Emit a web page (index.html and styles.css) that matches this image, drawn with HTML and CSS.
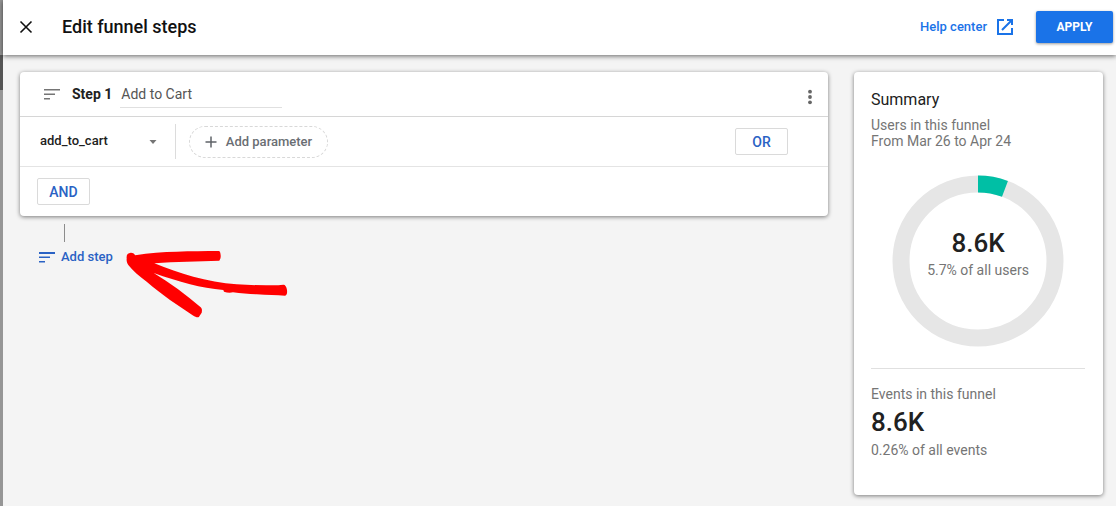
FILE: index.html
```html
<!DOCTYPE html>
<html lang="en">
<head>
<meta charset="utf-8">
<title>Edit funnel steps</title>
<link rel="stylesheet" href="styles.css">
</head>
<body>
<div class="backdrop"><div class="backdrop-bar"></div></div>
<div class="sheet">
  <header class="topbar">
    <button class="icon-button close" type="button" aria-label="Close">
      <svg width="14" height="14" viewBox="0 0 14 14"><path d="M1.5 1.5l11 11M12.500 1.500l-11 11" stroke="#111" stroke-width="1.600" fill="none"/></svg>
    </button>
    <h1 class="title">Edit funnel steps</h1>
    <a class="help" href="#">Help center
      <svg width="18" height="18" viewBox="0 0 18 18" fill="none" stroke="#1a73e8" stroke-width="2"><path d="M8 2H2v14h14v-6M11 2h5v5M16 2L6 12"/></svg>
    </a>
    <button class="apply" type="button">APPLY</button>
  </header>
  <main class="content">
    <div class="steps">
      <section class="card">
        <div class="step-head">
          <svg class="sort" width="17" height="12" viewBox="0 0 17 12" fill="#757575"><path d="M0 1h16v1.500H0zM0 5.500h11V7H0zM0 10h6v1.500H0z"/></svg>
          <label class="step-label" for="step-name">Step 1</label>
          <input class="step-name" id="step-name" type="text" value="Add to Cart">
          <button class="icon-button more" type="button" aria-label="More options">
            <svg width="6" height="16" viewBox="0 0 6 16" fill="#666"><circle cx="3" cy="2.700" r="1.900"/><circle cx="3" cy="8" r="1.900"/><circle cx="3" cy="13.300" r="1.900"/></svg>
          </button>
        </div>
        <div class="condition">
          <div class="event">
            <select class="event-select" aria-label="Event"><option>add_to_cart</option></select>
            <svg class="caret" width="8" height="4" viewBox="0 0 8 4"><path d="M0.500 0h7L4 4z" fill="#757575"/></svg>
          </div>
          <button class="parameter" type="button">
            <svg width="12" height="12" viewBox="0 0 12 12"><path d="M6 0.500v11M0.500 6h11" stroke="#5f6368" stroke-width="1.500"/></svg>
            Add parameter
          </button>
          <button class="logic or" type="button">OR</button>
        </div>
        <div class="step-foot"><button class="logic" type="button">AND</button></div>
      </section>
      <div class="connector"></div>
      <button class="add-step" type="button">
        <svg width="17" height="12" viewBox="0 0 17 12" fill="#2a62c4"><path d="M0 1h16v2H0zM0 5.500h11V7H0zM0 10h6v1.500H0z"/></svg>
        Add step
      </button>
      <svg class="arrow" width="164" height="70" viewBox="0 0 164 70" fill="#f00"><path d="M5.700 3.700C2.500 4.200 1.200 6 1.700 9.500C1.300 12 2 14 3.300 16C8 22 14 27 21.700 32.700C29 39 37 45 45 51L68 66.500C71 68.500 74 69 74.500 67L76.700 63.700C77 61 77.300 60 75.700 58.300C61 45.500 45 34 28.700 24C41 28.500 53 32 65 35.300C76 38 87 40 98.300 41L99 42.700C102 43.700 105 44 108 43.300C116 44.500 124 45 131.700 45.300C142 46 152 46.300 160 46.700C162 46 162.300 44 162 41C161.500 37.500 160 35.500 158.300 35.700L153.300 36.300C139 36.300 125 36.300 111.700 35.300C97 34 82 31.500 68.300 27.700C55 24 42 19.500 29.300 14.300C51 12.500 73 12.500 94.300 11.700C95.500 10 95.800 8.500 95.700 6.700C95.500 4 95 2 93.700 2C80 2.200 66 2.100 51.700 2.700C38 2.700 24 4 10.300 6.300C9 4.300 7.500 3.600 5.700 3.700z"/></svg>
    </div>
    <aside class="card summary">
      <h2 class="summary-title">Summary</h2>
      <p class="note period">Users in this funnel<br>From Mar 26 to Apr 24</p>
      <div class="donut">
        <svg width="172" height="172" viewBox="0 0 172 172" fill="none" stroke-width="17"><circle cx="86" cy="86" r="77" stroke="#e6e6e6"/><circle cx="86" cy="86" r="77" stroke="#00bfa5" pathLength="100" stroke-dasharray="5.700 94.300" transform="rotate(-90 86 86)"/></svg>
        <div class="donut-text">
          <strong class="figure">8.6K</strong>
          <span class="note">5.7% of all users</span>
        </div>
      </div>
      <div class="events">
        <span class="note">Events in this funnel</span>
        <strong class="figure">8.6K</strong>
        <span class="note">0.26% of all events</span>
      </div>
    </aside>
  </main>
</div>
</body>
</html>
```
FILE: styles.css
```css
* { box-sizing: border-box; }
body {
  margin: 0;
  min-height: 100vh;
  display: flex;
  font-family: Roboto, "Liberation Sans", sans-serif;
  font-size: 14px;
  color: #212121;
}
h1, h2, p { margin: 0; }
button, input, select { font: inherit; }
button {
  padding: 0;
  border: 0;
  background: none;
  cursor: pointer;
}
svg { display: block; flex: none; }
.backdrop {
  width: 3px;
  padding-top: 55px;
  background: #969696;
}
.backdrop-bar { height: 35px; background: #555; }
.sheet {
  flex: 1;
  display: flex;
  flex-direction: column;
  background: #f4f4f4;
}
.topbar {
  height: 55px;
  display: flex;
  align-items: center;
  padding: 0 3px 2px 16px;
  background: #fff;
  box-shadow: 0 1px 5px rgba(0, 0, 0, .6);
}
.icon-button { display: flex; }
.title {
  margin-left: 29px;
  font-size: 18px;
  font-weight: 500;
  color: #111;
}
.help {
  margin-left: auto;
  display: flex;
  align-items: center;
  gap: 9px;
  font-size: 13px;
  font-weight: 500;
  color: #1a73e8;
  text-decoration: none;
}
.apply {
  width: 77px;
  height: 32px;
  margin-left: 22px;
  border-radius: 2px;
  background: #1a73e8;
  box-shadow: 0 1px 3px rgba(0, 0, 0, .4);
  color: #fff;
  font-size: 12px;
  font-weight: 700;
}
.content {
  flex: 1;
  display: flex;
  align-items: flex-start;
  gap: 26px;
  padding: 17px 13px 10px 17px;
}
.steps { position: relative; flex: 1; }
.card {
  background: #fff;
  border-radius: 4px;
  box-shadow: 0 1px 4px rgba(0, 0, 0, .5);
}
.step-head {
  height: 45px;
  display: flex;
  align-items: center;
  padding: 0 15px 0 24px;
  border-bottom: 1px solid #d6d6d6;
}
.step-label {
  margin: 0 8px 0 11px;
  font-size: 14px;
  font-weight: 700;
}
.step-name {
  width: 162px;
  height: 27px;
  padding: 0 1px;
  border: 0;
  border-bottom: 1px solid #e0e0e0;
  background: none;
  font-size: 14px;
  color: #555;
}
.more { margin: 5px 0 0 auto; }
.condition {
  height: 50px;
  display: flex;
  align-items: center;
  padding: 0 40px 0 20px;
  border-bottom: 1px solid #e4e4e4;
}
.event {
  width: 136px;
  height: 35px;
  display: flex;
  align-items: center;
  border-right: 1px solid #dcdcdc;
}
.event-select {
  appearance: none;
  width: 109px;
  padding: 0 0 2px;
  border: 0;
  background: none;
  font-size: 13px;
  font-weight: 500;
  color: #212121;
}
.parameter {
  width: 139px;
  height: 32px;
  margin-left: 13px;
  display: flex;
  align-items: center;
  justify-content: center;
  gap: 9px;
  border: 1px dashed #d8d8d8;
  border-radius: 16px;
  font-size: 13px;
  font-weight: 500;
  color: #6a6e73;
}
.logic {
  width: 53px;
  height: 27px;
  border: 1px solid #dadada;
  border-radius: 2px;
  color: #2a62c4;
  font-weight: 500;
}
.or { margin-left: auto; }
.step-foot { padding: 11px 17px; }
.connector {
  width: 1px;
  height: 18px;
  margin: 8px 0 7px 44px;
  background: #8c8c8c;
}
.add-step {
  display: flex;
  align-items: center;
  gap: 5px;
  margin-left: 19px;
  color: #2a62c4;
  font-size: 13px;
  font-weight: 500;
}
.arrow {
  position: absolute;
  left: 105px;
  top: 177px;
}
.summary {
  width: 249px;
  min-height: 423px;
  padding: 18px 18px 17px 17px;
}
.summary-title {
  font-size: 16px;
  line-height: 20px;
  font-weight: 400;
}
.note {
  font-size: 14px;
  line-height: 16px;
  color: #757575;
}
.period { margin-top: 7px; }
.donut {
  display: grid;
  place-items: center;
  margin-top: 26px;
  padding-bottom: 21px;
  border-bottom: 1px solid #e0e0e0;
}
.donut > * { grid-area: 1 / 1; }
.donut-text {
  display: flex;
  flex-direction: column;
  align-items: center;
  gap: 3px;
  padding-bottom: 17px;
}
.figure {
  font-size: 26px;
  line-height: 32px;
  font-weight: 500;
}
.events {
  display: flex;
  flex-direction: column;
  gap: 4px;
  padding-top: 17px;
}
```
